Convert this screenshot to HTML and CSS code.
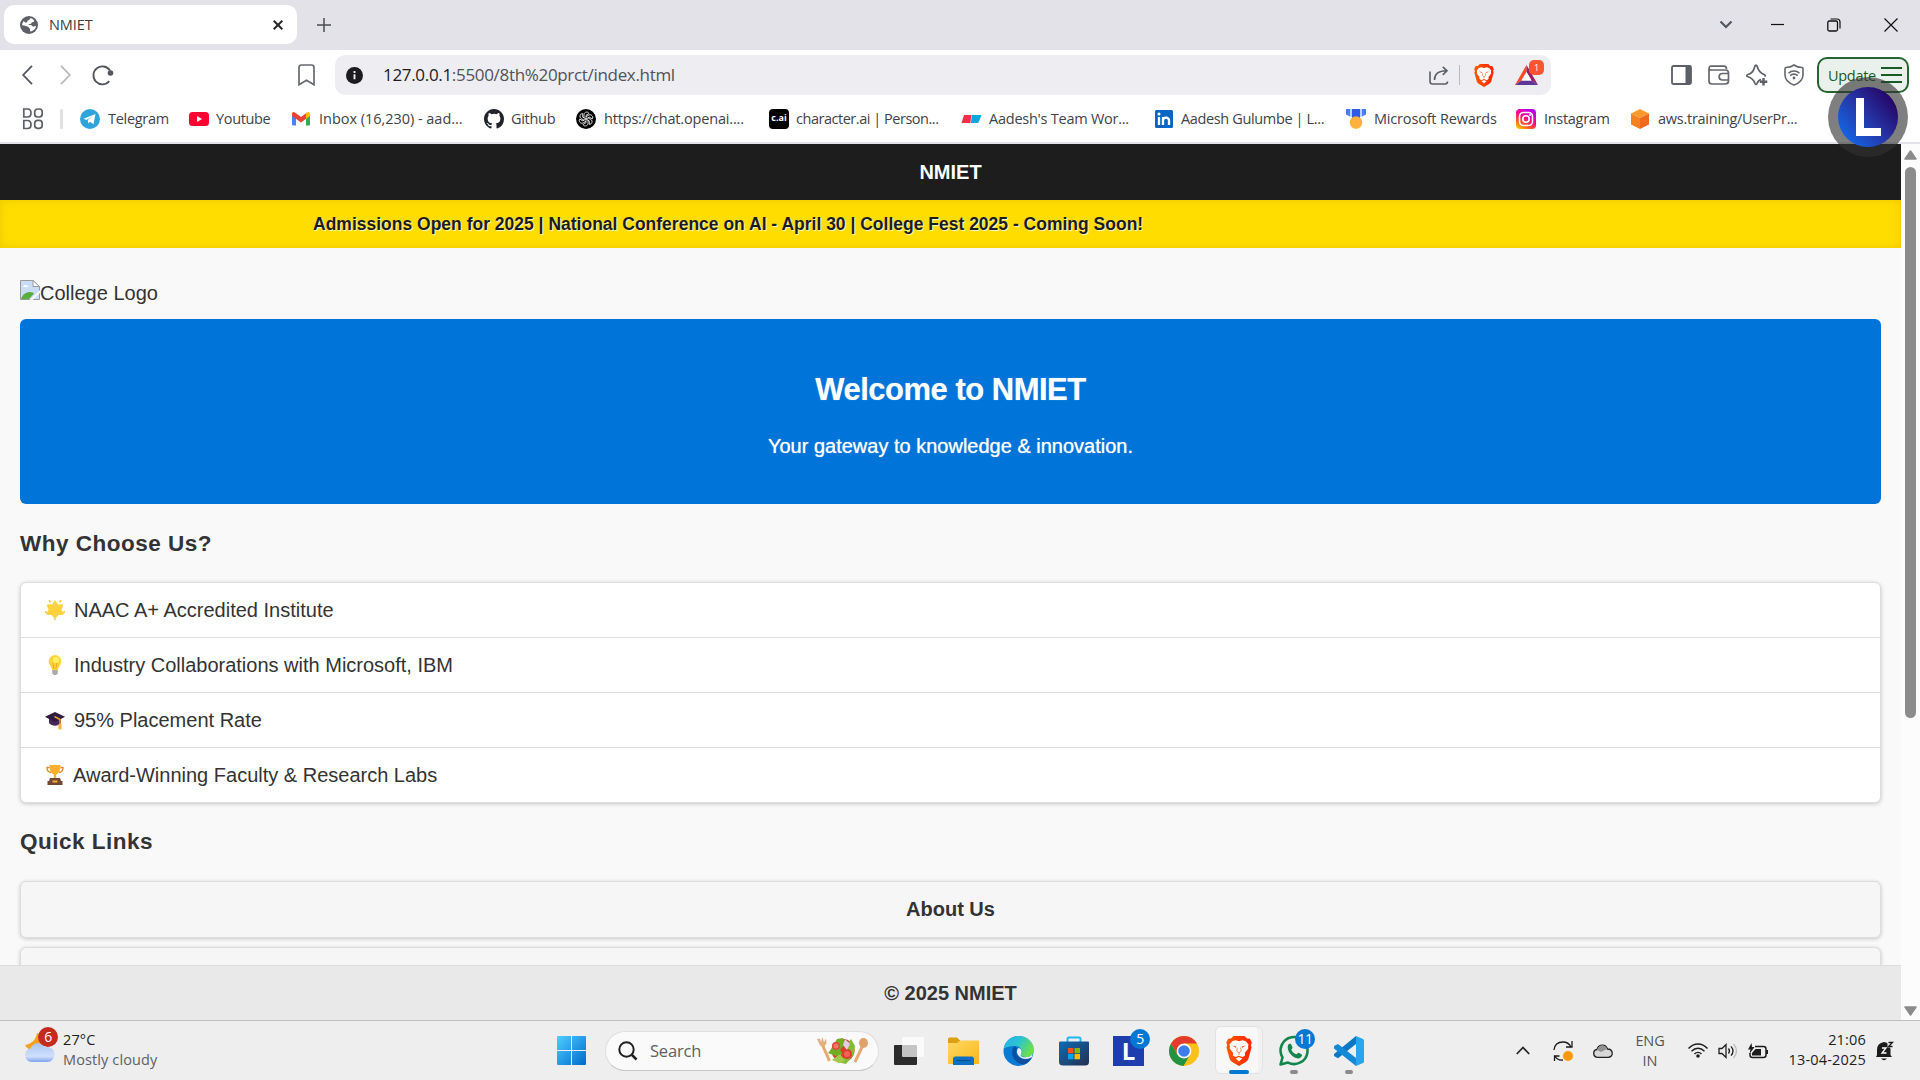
FILE: index.html
```html
<!DOCTYPE html>
<html lang="en">
<head>
<meta charset="utf-8">
<title>NMIET</title>
<link rel="stylesheet" href="styles.css">
</head>
<body>
<svg class="defs" width="0" height="0">
  <defs>
    <linearGradient id="win" x1="0" y1="0" x2="1" y2="1"><stop offset="0" stop-color="#4ccfff"/><stop offset="1" stop-color="#0069cc"/></linearGradient>
    <linearGradient id="insta" x1=".1" y1="1" x2=".7" y2="0"><stop offset="0" stop-color="#ffd000"/><stop offset=".3" stop-color="#ff5a1f"/><stop offset=".6" stop-color="#ff0090"/><stop offset="1" stop-color="#b400f0"/></linearGradient>
    <linearGradient id="folder" x1="0" y1="0" x2="1" y2="1"><stop offset="0" stop-color="#ffd864"/><stop offset="1" stop-color="#f9b81a"/></linearGradient>
    <linearGradient id="edgeTop" x1="0" y1="0" x2="1" y2=".5"><stop offset="0" stop-color="#2bb0ee"/><stop offset=".5" stop-color="#2bc3d2"/><stop offset="1" stop-color="#6be04c"/></linearGradient>
    <linearGradient id="store" x1="0" y1="0" x2="1" y2="1"><stop offset="0" stop-color="#0a6cb8"/><stop offset="1" stop-color="#26304f"/></linearGradient>
    <linearGradient id="cloud" x1="0" y1="0" x2="0" y2="1"><stop offset="0" stop-color="#a9c4f5"/><stop offset=".7" stop-color="#cfe0fb"/><stop offset="1" stop-color="#7ea4ec"/></linearGradient>
    <linearGradient id="lionRed"><stop offset="0" stop-color="#ff5a00"/><stop offset="1" stop-color="#ff2200"/></linearGradient>
    <symbol id="lion" viewBox="0 0 26 30">
      <path d="M7.500 0h11l2.500 2.500 2.800.2 2 3.800-.9 2.500.6 2.500-3 11c-.6 2-2 3-3.500 4L13 30l-6-3.500c-1.500-1-2.900-2-3.500-4l-3-11L1.100 9 .2 6.500l2-3.800L5 2.500z" fill="url(#lionRed)"/>
      <path d="M13 5.200l3.500-.9 3.300.9 2.700 3.300-.5 2 .4 1.800-3.600 4.600.3 2.500-2.600 1.700-3.500-1.400-3.500 1.400-2.600-1.700.3-2.500-3.600-4.600.4-1.800-.5-2 2.700-3.300 3.300-.9zM13 21l3.300 1.600L13 25.400l-3.300-2.800z" fill="#fff"/>
      <path d="M6.300 9.400l4.300 1.200-.9 1.100zM19.700 9.400l-4.300 1.200.9 1.100z" fill="#fb4a14"/>
      <path d="M11.300 11.500l-.5 3.600 2.200 1.700 2.200-1.700-.5-3.600M13 16.800v2.200" stroke="#fb6a3a" stroke-width=".8" fill="none"/>
    </symbol>
  </defs>
</svg>

<div class="screen">
  <div class="tabstrip">
    <div class="tab">
      <svg class="globe" width="18" height="18" viewBox="0 0 18 18"><circle cx="9" cy="9" r="9" fill="#5d6066"/><path d="M10.500 2c1.600.4 3 1.500 3.800 3-.7 1.300-1.700 1.200-2.600 1.400-.3 1.200-1.200 1.500-2.300 1.500-.6 0-.7.700-1.200.9l2.800.1c1.100.2 1.300 1.700 2.500 1.700 1 0 2-.3 2.600-.8-.2 2.700-2.600 5.400-5.700 5.600-.8-.8.1-2.100-.6-2.900-1-.8-1.200-.2-1.300-1.400C7.200 10 4.600 9.700 2.200 9.200 2 7.600 2.800 6 3.700 4.900 4.800 6 5.500 6.700 6.800 6.400c.8-.3.300-1.200.9-1.800.9-.4 2.300-.8 2.800-2.600z" fill="#fff"/></svg>
      <span class="tab-title">NMIET</span>
      <svg class="tab-close" width="10" height="10" viewBox="0 0 10 10"><path d="M.7.7l8.600 8.600M9.300.7L.7 9.300" stroke="#27282c" stroke-width="2"/></svg>
    </div>
    <svg class="newtab" width="14" height="14" viewBox="0 0 14 14"><path d="M7 0v14M0 7h14" stroke="#4a4c52" stroke-width="1.500"/></svg>
    <div class="winctl">
      <svg width="14" height="9" viewBox="0 0 14 9"><path d="M1.500 1.500L7 7l5.500-5.500" fill="none" stroke="#53565d" stroke-width="2.200"/></svg>
      <svg width="14" height="14" viewBox="0 0 14 14"><path d="M0 6.500h13" stroke="#111" stroke-width="1.200"/></svg>
      <svg width="14" height="14" viewBox="0 0 14 14"><path d="M3.500 1h6.500c1.700 0 3 1.300 3 3v6.500" fill="none" stroke="#111" stroke-width="1.200"/><rect x=".8" y="3" width="9.700" height="10" rx="1.500" fill="none" stroke="#111" stroke-width="1.300"/></svg>
      <svg width="14" height="14" viewBox="0 0 14 14"><path d="M.5.500l13 13M13.500.500l-13 13" stroke="#111" stroke-width="1.200"/></svg>
    </div>
  </div>

  <div class="toolbar">
    <div class="nav">
      <svg width="11" height="20" viewBox="0 0 11 20"><path d="M10 .8L1.200 10 10 19.200" fill="none" stroke="#53565e" stroke-width="1.800"/></svg>
      <svg width="11" height="20" viewBox="0 0 11 20"><path d="M1 .8L9.800 10 1 19.200" fill="none" stroke="#b9bac0" stroke-width="1.800"/></svg>
      <svg width="22" height="21" viewBox="0 0 22 21"><path d="M17.300 16.200A9 9 0 1 1 18 5.500" fill="none" stroke="#53565e" stroke-width="1.800"/><circle cx="18.500" cy="8" r="2.800" fill="#53565e"/></svg>
    </div>
    <svg class="bookmark" width="17" height="22" viewBox="0 0 17 22"><path d="M1 3.500C1 2 2 1 3.500 1h10C15 1 16 2 16 3.500V20.800l-7.500-4.500L1 20.800z" fill="none" stroke="#66696f" stroke-width="1.700"/></svg>
    <div class="address">
      <svg width="17" height="17" viewBox="0 0 17 17"><circle cx="8.500" cy="8.500" r="8.500" fill="#1b1b20"/><path d="M8.500 7.300v5M8.500 4v2" stroke="#eeedf2" stroke-width="1.900"/></svg>
      <span class="url"><b>127.0.0.1</b>:5500/8th%20prct/index.html</span>
      <svg class="share" width="20" height="19" viewBox="0 0 20 19"><path d="M1 5.500V15.500Q1 18 3.500 18H16Q18.500 18 18.500 15.500M5.500 14C5.500 8 9 4.800 17.500 4.800M13.800.8l4.200 4-4.200 4" fill="none" stroke="#5c5f66" stroke-width="1.600"/></svg>
      <i class="sep"></i>
      <svg class="shield" width="20" height="23"><use href="#lion"/></svg>
      <span class="bat"><svg width="23" height="20" viewBox="0 0 23 20"><path d="M11.500 0L0 20l6.500-4.500L11.500 7z" fill="#ff4b25"/><path d="M11.500 0L23 20l-6.500-4.500L11.500 7z" fill="#9c1d62"/><path d="M0 20h23l-6.500-4.500h-10z" fill="#5e3799"/><path d="M11.500 7l-5 8.500h10z" fill="#fff"/></svg><em>1</em></span>
    </div>
    <div class="actions">
      <svg width="21" height="20" viewBox="0 0 21 20"><rect x="1" y="1" width="19" height="18" rx="1.500" fill="none" stroke="#5c5f66" stroke-width="1.800"/><path d="M14.500 1h5.500v18h-5.500z" fill="#5c5f66"/></svg>
      <svg width="22" height="20" viewBox="0 0 22 20"><path d="M1 4v12c0 2 1 3 3 3h13c2 0 3.500-1 3.500-3V8c0-1.800-1-3-3-3H3C1.500 5 1 4 1 3.500S1.500 1.200 3 1.200h13c1.500 0 2.500.8 2.500 2.800M20.500 8.500h-6c-4.500 0-4.500 6.500 0 6.500h6" fill="none" stroke="#64676d" stroke-width="1.700"/></svg>
      <svg width="22" height="22" viewBox="0 0 22 22"><path d="M15 15.500c-2 .5-3 1.500-4 4-.5 1.300-1.500 1.300-2 0-1.300-4-3-5.500-7.500-7-1-.4-1-1.300 0-1.700C6 9.300 7.500 7.500 9 2c.4-1.300 1.500-1.300 2 0 1.300 5 3 7 7.500 8.800 1 .4 1 1.200 0 1.600" fill="none" stroke="#5c5f66" stroke-width="1.700"/><path d="M17.500 14v7.500M13.800 17.800h7.500" stroke="#5c5f66" stroke-width="2.400"/></svg>
      <svg width="20" height="22" viewBox="0 0 20 22"><path d="M10 1c2 1.500 5 2.500 8 2.500.8 0 1 .5 1 1.500v6c0 5-3.500 8-9 10C4.500 19 1 16 1 11V5c0-1 .2-1.500 1-1.500C5 3.500 8 2.500 10 1z" fill="none" stroke="#64676d" stroke-width="1.600"/><path d="M4.500 9.200c3-3 8-3 11 0M6.200 11.600c2-2 5.600-2 7.600 0" fill="none" stroke="#64676d" stroke-width="1.600"/><circle cx="10" cy="14" r="1.400" fill="#64676d"/></svg>
    </div>
    <div class="update"><span>Update</span><svg width="21" height="16" viewBox="0 0 21 16"><path d="M0 1h21M0 8h21M0 15h21" stroke="#165c25" stroke-width="2"/></svg></div>
  </div>

  <div class="bookmarks">
    <svg width="20" height="21" viewBox="0 0 20 21"><path d="M0 1h4.500Q8 1 8 5T4.500 9H0M0 12.500h4.500q3.500 0 3.500 4t-3.500 4H0M.8 1v8M.8 12.500v8" fill="none" stroke="#5c5f66" stroke-width="1.700"/><rect x="11.700" y="1" width="7.500" height="8" rx="3" fill="none" stroke="#5c5f66" stroke-width="1.700"/><rect x="11.700" y="12.300" width="7.500" height="8" rx="3" fill="none" stroke="#5c5f66" stroke-width="1.700"/></svg>
    <i class="bar"></i>
    <a class="bm"><svg width="20" height="20" viewBox="0 0 20 20"><circle cx="10" cy="10" r="10" fill="#2fa3dc"/><path d="M3.500 9.800L15.500 5l-2 10.200-3.400-2.500-1.800 1.700-.5-3.300L12.800 7l-6.300 3.900z" fill="#fff"/></svg><span class="s-tel">Telegram</span></a>
    <a class="bm"><svg width="20" height="20" viewBox="0 0 20 20"><rect y="3" width="20" height="14" rx="3.500" fill="#ff0033"/><path d="M8 7l5 3-5 3z" fill="#fff"/></svg><span class="s-yt">Youtube</span></a>
    <a class="bm"><svg width="18" height="20" viewBox="0 0 18 20"><path d="M0 6h4v10.500H1.200Q0 16.500 0 15.300z" fill="#4285f4"/><path d="M14 6h4v9.300q0 1.200-1.200 1.200H14z" fill="#34a853"/><path d="M0 5q0-3 3-1.500L9 8l6-4.500V9l-6 4.500L4 9.700 0 7.500z" fill="#ea4335"/><path d="M14 4.200Q18 1.500 18 5v2l-4 3z" fill="#fbbc04"/></svg><span class="s-mail">Inbox (16,230) - aad...</span></a>
    <a class="bm"><svg width="20" height="20" viewBox="0 0 16 16"><path fill="#20242a" d="M8 0C3.580 0 0 3.580 0 8c0 3.540 2.290 6.530 5.470 7.590.4.070.55-.17.55-.38 0-.19-.01-.82-.01-1.490-2.010.37-2.530-.49-2.690-.94-.09-.23-.48-.94-.82-1.130-.28-.15-.68-.52-.01-.53.63-.01 1.080.58 1.230.82.72 1.210 1.870.87 2.330.66.07-.52.28-.87.51-1.070-1.780-.2-3.640-.89-3.640-3.950 0-.87.31-1.590.82-2.150-.08-.2-.36-1.020.08-2.120 0 0 .67-.21 2.200.82a7.600 7.600 0 0 1 4 0c1.530-1.040 2.200-.82 2.200-.82.44 1.100.16 1.920.08 2.120.51.56.82 1.270.82 2.150 0 3.070-1.870 3.750-3.650 3.950.29.25.54.73.54 1.480 0 1.070-.01 1.930-.01 2.200 0 .21.15.46.55.38A8 8 0 0 0 16 8c0-4.420-3.580-8-8-8z"/></svg><span class="s-git">Github</span></a>
    <a class="bm"><svg width="20" height="20" viewBox="0 0 20 20"><circle cx="10" cy="10" r="10" fill="#000"/><g fill="none" stroke="#fff" stroke-width=".8"><path id="knot" d="M8 8.800V5.700c0-3 4-3.500 5-1.200L10 6.300v3.500"/><use href="#knot" transform="rotate(60 10 10)"/><use href="#knot" transform="rotate(120 10 10)"/><use href="#knot" transform="rotate(180 10 10)"/><use href="#knot" transform="rotate(240 10 10)"/><use href="#knot" transform="rotate(300 10 10)"/></g></svg><span class="s-ai">https://chat.openai....</span></a>
    <a class="bm"><i class="cai">c.ai</i><span class="s-cai">character.ai | Person...</span></a>
    <a class="bm"><svg width="20" height="20" viewBox="0 0 20 20"><path d="M3 6h7.500l-1.200 8H.5z" fill="#f22f46"/><path d="M11 6h9.500L18 12.500Q17.500 14 16 14H9.800z" fill="#06a7e2"/></svg><span class="s-team">Aadesh's Team Wor...</span></a>
    <a class="bm"><svg width="18" height="20" viewBox="0 0 18 20"><rect y="1" width="18" height="18" rx="1.500" fill="#0a66c2"/><path d="M4 8v8M8 8v8M8 11.500C8 8 14 7.500 14 11.500V16" fill="none" stroke="#fff" stroke-width="2.300"/><circle cx="4" cy="5" r="1.500" fill="#fff"/></svg><span class="s-in">Aadesh Gulumbe | L...</span></a>
    <a class="bm"><svg width="20" height="20" viewBox="0 0 20 20"><path d="M0 0h4v7.500L0 5.500zM16 0h4v5.500l-4 2z" fill="#4b7df8"/><path d="M4 0h2v8l-2-.5zM14 0h2v7.500l-2 .5z" fill="#b8d3ff"/><path d="M6 0h8v9H6z" fill="#305be8"/><circle cx="10" cy="13.500" r="6.300" fill="#ffb03f"/></svg><span class="s-ms">Microsoft Rewards</span></a>
    <a class="bm"><svg width="20" height="20" viewBox="0 0 20 20"><rect width="20" height="20" rx="4" fill="url(#insta)"/><rect x="3.500" y="3.500" width="13" height="13" rx="4" fill="none" stroke="#fff" stroke-width="1.600"/><circle cx="10" cy="10" r="3.200" fill="none" stroke="#fff" stroke-width="1.600"/><circle cx="14" cy="6" r="1" fill="#fff"/></svg><span class="s-ig">Instagram</span></a>
    <a class="bm"><svg width="20" height="20" viewBox="0 0 20 20"><path d="M10 0l9 4.500L10 9 1 4.500z" fill="#fb9a2c"/><path d="M1 4.500L10 9v11l-9-4.500z" fill="#f58220"/><path d="M19 4.500L10 9v11l9-4.500z" fill="#ee6a1f"/></svg><span class="s-aws">aws.training/UserPr...</span></a>
  </div>

  <div class="viewport">
    <main class="page">
      <header class="page-header">NMIET</header>
      <div class="ticker"><span>Admissions Open for 2025 | National Conference on AI - April 30 | College Fest 2025 - Coming Soon!</span></div>
      <div class="content">
        <div class="logo"><svg width="20" height="20" viewBox="0 0 20 20"><path d="M.5.500h12.500l6.500 6v13H.5z" fill="#c9dcfa" stroke="#9a9a9a"/><path d="M3 7q.5-2 2.500-2T8 6.500Q9.500 7 9.300 7z" fill="#fff"/><path d="M1 19c2-5 5-7 9-7 2 0 3 .8 4 1.500L9 19z" fill="#58ad3b"/><path d="M20.500 9.500v3L12 20.500H9z" fill="#f9f9f9"/><path d="M13 .5l6.500 6H13z" fill="#fff" stroke="#9a9a9a"/></svg><span>College Logo</span></div>
        <section class="hero"><h1>Welcome to NMIET</h1><p>Your gateway to knowledge &amp; innovation.</p></section>
        <h3 class="why">Why Choose Us?</h3>
        <ul class="list">
          <li><svg width="20" height="20" viewBox="0 0 20 20"><path d="M10 1.500l2.300 4.200 4.900-.4-1.900 4.400 2.500 4-4.700.2L10 17.500l-3.100-3.600-4.700-.2 2.500-4-1.900-4.400 4.900.4z" fill="#ffd23e" stroke="#ffd23e" stroke-width="2" stroke-linejoin="round"/><path d="M4 .3l1.500 1.900M16 .3l-1.500 1.900M0 12l1.800.4M20 12l-1.800.4M10 18.500V20" stroke="#f9c22b" stroke-width="1.500"/></svg><span>NAAC A+ Accredited Institute</span></li>
          <li><svg width="20" height="20" viewBox="0 0 20 20"><path d="M10 0a6.300 6.300 0 0 0-6.300 6.500c0 3.500 3 5 3.500 8.500h5.600c.5-3.500 3.500-5 3.500-8.500A6.300 6.300 0 0 0 10 0z" fill="#ffd43b"/><circle cx="11" cy="5" r="3" fill="#fff06a"/><path d="M8 8l1 6M12 8l-1 6" stroke="#f5a623"/><path d="M7.200 15h5.600v3.500L11 20H9l-1.800-1.500z" fill="#aaa"/></svg><span>Industry Collaborations with Microsoft, IBM</span></li>
          <li><svg width="20" height="20" viewBox="0 0 20 20"><path d="M4 8v5c3 3.500 9 3.500 12 0V8z" fill="#46295a"/><path d="M10 2l10 4.800-10 5.400L0 6.800z" fill="#301b45"/><path d="M9.500 6.500L15 9.500v9" fill="none" stroke="#e99a2a" stroke-width="1.500"/><path d="M13.500 14h3v5.500h-3z" fill="#ffae3b"/></svg><span>95% Placement Rate</span></li>
          <li><svg width="20" height="20" viewBox="0 0 20 20"><path d="M4.500 2.500H2Q2 7 6 7.500M15.500 2.500H18Q18 7 14 7.500" fill="none" stroke="#d88a32" stroke-width="1.400"/><path d="M4.500 0h11c0 5-.8 8-4.300 9.500V13H8.800V9.500C5.300 8 4.500 5 4.500 0z" fill="#ffae2e"/><path d="M5 13h10l1 3h1.500v4h-15v-4H4z" fill="#704838"/><path d="M7.500 15.500h5v2h-5z" fill="#ffae2e"/></svg><span class="award">Award-Winning Faculty &amp; Research Labs</span></li>
        </ul>
        <h3 class="quick">Quick Links</h3>
        <a class="btn">About Us</a>
        <a class="btn"></a>
      </div>
      <footer class="page-footer">© 2025 NMIET</footer>
    </main>
    <div class="scroll">
      <svg width="13" height="10" viewBox="0 0 13 10"><path d="M6.500 1L12 9H1z" fill="#8b8b8b" stroke="#8b8b8b" stroke-linejoin="round" stroke-width="1.500"/></svg>
      <i class="thumb"></i>
      <svg width="13" height="10" viewBox="0 0 13 10"><path d="M6.500 9L12 1H1z" fill="#8b8b8b" stroke="#8b8b8b" stroke-linejoin="round" stroke-width="1.500"/></svg>
    </div>
  </div>

  <div class="taskbar">
    <div class="weather">
      <span class="w-icon"><svg width="32" height="32" viewBox="0 0 32 32"><path d="M13 1c-1 6-5 11-12 12 2 4 6 6 10 5s7-5 7-9-2-7-5-8z" fill="#f5a11d"/><path d="M7.500 30a7 7 0 0 1-1-13.800C8 12.500 12 10.300 16 11.500c2 .5 3.800 2 4.500 4 5-1.500 10 1.500 10 7a7.300 7.300 0 0 1-7 7.500z" fill="url(#cloud)"/></svg><em class="badge red">6</em></span>
      <div class="w-text"><span>27°C</span><span class="dim">Mostly cloudy</span></div>
    </div>
    <svg class="start" width="29" height="29" viewBox="0 0 29 29"><path d="M1 0h13v14H0V1Q0 0 1 0zM15 0h13q1 0 1 1v13H15zM0 15h14v14H1q-1 0-1-1zM15 15h14v13q0 1-1 1H15z" fill="url(#win)"/></svg>
    <div class="search">
      <svg width="20" height="20" viewBox="0 0 20 20"><circle cx="8.500" cy="8.500" r="7.200" fill="none" stroke="#222" stroke-width="2"/><path d="M13.500 13.500l5 5" stroke="#222" stroke-width="2.500"/></svg>
      <span>Search</span>
      <svg width="51" height="27" viewBox="0 0 51 27"><path d="M5.500 8l7 16M46 8l-8 17" stroke="#e5aa72" stroke-width="3"/><path d="M0 2l3-.5 1 3.500 1.500-5 1.500 5 2-3.500.5 5Q7 11 3 8.500z" fill="#e5b080"/><ellipse cx="46.500" cy="6" rx="4.500" ry="5" fill="#dfa26b"/><circle cx="26" cy="13.500" r="11.500" fill="#d8402e"/><path d="M20 2l6-1 2 6-5 6 3 4-7 2-8-3 4-5z" fill="#71ad25"/><path d="M34 2l4 7-1 8-4 5-4 5-9-2 3-4 7-1 2-6-4-4z" fill="#86bb35"/><path d="M15 23l8-6 5 7-6 2z" fill="#a4ca4b"/><circle cx="19" cy="9" r="4" fill="#e4493a"/><circle cx="19" cy="9" r="2.500" fill="#f0796a"/><circle cx="30" cy="17" r="5" fill="#dd3a2c"/><circle cx="30" cy="17" r="3" fill="#ee6455"/><path d="M28 2l5 5-3 6-4-5z" fill="#e4cce1"/></svg>
    </div>
    <div class="apps">
      <span class="app"><svg width="30" height="28" viewBox="0 0 30 28"><rect y="8" width="23" height="20" rx="1" fill="#2c2c2c"/><rect x="8" width="22" height="20" rx="1" fill="#fff" opacity=".72"/></svg></span>
      <span class="app"><svg width="31" height="28" viewBox="0 0 31 28"><path d="M0 2q0-1.500 1.500-1.500H9L12.500 4v4H0z" fill="#dda010"/><path d="M0 6h9l3.500-2.500H30q1 0 1 1V27H0z" fill="url(#folder)"/><path d="M5 28v-6q0-2.500 2.500-2.500h16Q26 19.500 26 22v6z" fill="#0d70c5"/><path d="M8.500 23.500h14" stroke="#064f92" stroke-width="1.200"/></svg></span>
      <span class="app"><svg width="31" height="30" viewBox="0 0 31 30"><circle cx="15.500" cy="15" r="15" fill="#087bd5"/><path d="M.7 12.500C2.500 4.500 8.500 0 15.500 0 24 0 31 6 31 13.500c0 5-3.500 7.500-8 7.500-4 0-6-1.500-5-3 2-3-.5-8-6-8C7 9.500 3 11.500.7 12.500z" fill="url(#edgeTop)"/><path d="M12 10C7.500 12 7 27 21 28.500c3-1 6-3.500 7.500-6.500-9 4-18-2-14.500-9.500z" fill="#0f4f9f"/><path d="M18 18c-1 2 1 3.500 4.500 3.300 3 0 5.500-1 7-3l-.5 2.700c-4 2.500-9 2.500-12 0-4-3-3.500-7.500-1.500-9 2.500.5 4 3 2.500 6z" fill="#eee"/></svg></span>
      <span class="app"><svg width="30" height="30" viewBox="0 0 30 30"><path d="M8.500 7V3q0-1.500 1.500-1.500h10q1.500 0 1.500 1.500v4" fill="none" stroke="#22b5f3" stroke-width="2"/><path d="M1 5.500h28q1 0 1 1V26q0 3.500-4 3.500H4q-4 0-4-3.500V6.500q0-1 1-1z" fill="url(#store)"/><path d="M9 12h5.500v5.300H9z" fill="#f25022"/><path d="M15.500 12H21v5.300h-5.500z" fill="#7fba00"/><path d="M9 18h5.500v5.300H9z" fill="#00a4ef"/><path d="M15.500 18H21v5.300h-5.500z" fill="#ffb900"/></svg></span>
      <span class="app"><i class="lapp">L</i><em class="badge blue">5</em></span>
      <span class="app"><svg width="30" height="30" viewBox="0 0 30 30"><circle cx="15" cy="15" r="15" fill="#fbc116"/><path d="M2 7.500A15 15 0 0 1 28 7.500H15l-6.500 11z" fill="#e33b2e"/><path d="M2 7.500L8.500 18.700 15 22l-.5 8A15 15 0 0 1 2 7.500z" fill="#229342"/><path d="M14.500 30L21 18.700 15 22H9z" fill="#229342"/><circle cx="15" cy="15" r="7.400" fill="#fff"/><circle cx="15" cy="15" r="5.800" fill="#3d7eea"/></svg></span>
      <span class="app active"><i class="tile"></i><svg width="26" height="30"><use href="#lion"/></svg></span>
      <span class="app run"><svg width="30" height="30" viewBox="0 0 30 30"><path d="M1.500 28.500l2-7A13.500 13.500 0 1 1 9 26.600z" fill="none" stroke="#15854f" stroke-width="2.600" stroke-linejoin="round"/><path d="M9 9c1.500-2 3-1.500 3.500 0l1 2.500c.2.800-1.500 2-1 2.700 1 1.800 2.500 3.200 4.500 4 1 .4 1.800-1.800 2.700-1.500l2.800 1.500c1.500.8-.5 4-3 4.200C14.500 22.800 7 15.500 9 9z" fill="#15854f"/></svg><em class="badge blue">11</em></span>
      <span class="app run"><svg width="30" height="30" viewBox="0 0 30 30"><path d="M22 0v8L4 22.300 0 20v-2z" fill="#0a78c2"/><path d="M4 8l18 14v8L0 12.500V10z" fill="#1489d6"/><path d="M22 0l7 3q1 .5 1 1.500v21q0 1-1 1.500l-7 3z" fill="#27a5ee"/></svg></span>
    </div>
    <div class="tray">
      <svg width="14" height="9" viewBox="0 0 14 9"><path d="M.8 8L7 1.500 13.200 8" fill="none" stroke="#222" stroke-width="1.700"/></svg>
      <svg width="20" height="20" viewBox="0 0 20 20"><path d="M1 9C1.500 4 5 1 10 1c4 0 6.500 2 8 5M19 0v6h-6M1.500 20v-5h5M2 15c1.500 3 4.500 4.500 8 4" fill="none" stroke="#1b1b1b" stroke-width="1.300"/><circle cx="15" cy="15" r="5" fill="#ff9800"/></svg>
      <svg width="20" height="14" viewBox="0 0 20 14"><path d="M5 13.300C-.5 13.300-.5 6 4 5.500 5 .5 12.500-.8 14.500 5c6 0 6.500 8.300.5 8.300z" fill="#d8d8d8" stroke="#222" stroke-width="1.300"/><path d="M4 6C6 0 12 0 14 5l-6 3z" fill="#929292"/></svg>
      <div class="lang"><span>ENG</span><span>IN</span></div>
      <svg width="20" height="15" viewBox="0 0 20 15"><path d="M.5 5.500c5.500-6 13.500-6 19 0M3.500 8.300c4-4 9-4 13 0M6.500 11c2-2.200 5-2.200 7 0" fill="none" stroke="#1f1f1f" stroke-width="1.400"/><circle cx="10" cy="13" r="1.800" fill="#1f1f1f"/></svg>
      <svg width="20" height="16" viewBox="0 0 20 16"><path d="M1 5.500v5h3l4 4v-13l-4 4z" fill="none" stroke="#1f1f1f" stroke-width="1.300"/><path d="M10.500 5.500q2 2.500 0 5M13 3.300q4 4.700 0 9.400" fill="none" stroke="#1f1f1f" stroke-width="1.300"/><path d="M15.500 1q6 7 0 14" fill="none" stroke="#bbb" stroke-width="1.300"/></svg>
      <svg width="20" height="16" viewBox="0 0 20 16"><path d="M7 3.500h8.500Q18 3.500 18 6v6q0 2.500-2.500 2.500h-11Q2 14.500 2 12V10" fill="none" stroke="#1b1b1b" stroke-width="1.500"/><path d="M18 7h2v4h-2zM7.500 6h5.500v6.500H4V10z" fill="#1b1b1b"/><path d="M3.500 0L0 6.500h2.500L1.500 11 6.500 4H4z" fill="#1b1b1b"/></svg>
      <div class="clock"><span>21:06</span><span>13-04-2025</span></div>
      <svg width="18" height="20" viewBox="0 0 18 20"><path d="M1 14V9q0-7 7-8 6 1 6.500 7v6l1.500 2H0z" fill="#1b1b1b"/><path d="M5 17.500h6Q8 21 5 17.500z" fill="#1b1b1b"/><path d="M11.500 0h6v6.500h-6z" fill="#eee"/><path d="M12.500 1.500h4l-4 4h4" fill="none" stroke="#1b1b1b" stroke-width="1.300"/><path d="M6 7h4l-4 5h4.500" fill="none" stroke="#fff" stroke-width="1.300"/></svg>
    </div>
  </div>
  <div class="bubble"><i></i></div>
</div>
</body>
</html>
```

FILE: styles.css
```css
* { box-sizing: border-box; }
body { margin: 0; font-family: "Open Sans", "Noto Sans", sans-serif; overflow: hidden; }
svg { flex: none; display: block; overflow: visible; }
i, em { font-style: normal; }
.defs { position: absolute; }
.screen { position: relative; width: 1920px; height: 1080px; display: flex; flex-direction: column; background: #fff; white-space: nowrap; overflow: hidden; }

.tabstrip { height: 50px; flex: none; background: #e3e2e8; display: flex; padding: 5px 22px 6px 4px; align-items: center; }
.tab { width: 293px; height: 39px; border-radius: 10px; background: #fff; display: flex; align-items: center; padding: 0 14px 0 16px; }
.tab-title { margin-left: 11px; font-size: 14.5px; letter-spacing: -.1px; color: #3b3d43; flex: 1; }
.newtab { margin-left: 20px; }
.winctl { margin-left: auto; display: flex; align-items: center; }
.winctl svg:nth-child(2) { margin-left: 38px; }
.winctl svg:nth-child(n+3) { margin-left: 42px; }
.winctl svg:nth-child(4) { margin-left: 43px; }

.toolbar { height: 50px; flex: none; display: flex; align-items: center; padding-right: 11px; }
.nav { display: flex; align-items: center; padding-left: 22px; width: 298px; }
.nav svg:nth-child(2) { margin-left: 27px; }
.nav svg:nth-child(3) { margin-left: 21px; }
.address { margin-left: 20px; width: 1216px; height: 40px; border-radius: 10px; background: #eeedf2; display: flex; align-items: center; padding-left: 11px; }
.url { margin-left: 20px; width: 1046px; padding-bottom: 2px; font-size: 17px; letter-spacing: -.32px; color: #50525a; }
.url b { font-weight: 400; color: #1b1b20; }
.sep { width: 1px; height: 20px; background: #bbbac1; margin: 0 14px 0 10px; }
.bat { position: relative; margin-left: 21px; }
.bat em { position: absolute; left: 14px; top: -5px; width: 15px; height: 15px; border-radius: 5px; background: #fc5430; color: #fff; font-size: 9px; line-height: 15px; text-align: center; }
.actions { display: flex; align-items: center; gap: 16px; margin-left: 120px; }
.update { margin-left: auto; width: 92px; height: 36px; border: 2px solid #25652f; border-radius: 10px; background: #eaf0eb; color: #165c25; display: flex; align-items: center; padding-left: 9px; gap: 5px; font-size: 14.5px; letter-spacing: -.3px; }
.update span { width: 48px; }

.bookmarks { height: 44px; flex: none; border-bottom: 2px solid #e3e2e8; display: grid; grid-template-columns: 37px 20px 109px 103px 192px 92px 193px 192px 194px 191px 170px 114px 200px; padding: 0 0 5px 23px; align-items: center; }
.bar { width: 3px; height: 20px; border-radius: 2px; background: #e0dfe6; }
.bm { display: flex; align-items: center; gap: 8px; font-size: 14.5px; letter-spacing: -.3px; color: #414349; }
.s-yt { margin-left: -1px; letter-spacing: -.35px; }
.s-cai { margin-left: -1px; letter-spacing: -.47px; }
.s-mail { margin-left: 1px; letter-spacing: -.03px; }
.s-git { margin-left: -1px; }
.s-ai, .s-ms { letter-spacing: -.18px; }
.s-team { letter-spacing: -.24px; }
.s-in { letter-spacing: -.36px; }
.s-aws { letter-spacing: -.26px; }
.cai { width: 20px; height: 20px; border-radius: 4px; background: #000; color: #fff; font-size: 9px; font-weight: 700; line-height: 18px; text-align: center; letter-spacing: 0; }

.viewport { height: 876px; flex: none; display: flex; font-family: "Liberation Sans", Arial, sans-serif; color: #333; }
.page { width: 1901px; display: flex; flex-direction: column; background: #f9f9f9; }
.page-header { height: 56px; flex: none; background: #1d1d1d; color: #fff; font-weight: 700; font-size: 20px; line-height: 56px; text-align: center; }
.ticker { height: 48px; flex: none; background: #fd0; box-shadow: inset 0 0 8px rgba(0,0,0,.1); padding-left: 313px; font-weight: 700; font-size: 17.5px; line-height: 49px; color: #1c1c1c; text-shadow: 1px 1px 1px rgba(255,255,255,.8); }
.content { flex: 1; min-height: 0; overflow: hidden; padding: 32px 20px 0; display: flex; flex-direction: column; }
.logo { height: 39px; flex: none; display: flex; font-size: 20px; line-height: 26px; }
.hero { height: 185px; flex: none; border-radius: 6px; background: #0074d9; color: #fff; text-align: center; padding-top: 50px; }
.hero h1 { margin: 0; font-size: 31px; line-height: 42px; letter-spacing: -.5px; text-shadow: 0 0 1px rgba(255,255,255,.5); }
.hero p { margin: 22px 0 0; font-size: 20px; line-height: 26px; text-shadow: 0 0 1px rgba(255,255,255,.8); }
h3 { margin: 0; flex: none; font-size: 22.5px; line-height: 30px; letter-spacing: .5px; }
.why { margin-top: 25px; }
.list { list-style: none; margin: 23px 0 0; padding: 0; border: 1px solid #ddd; border-radius: 6px; background: #fff; box-shadow: 0 1px 4px rgba(0,0,0,.2); }
.list li { height: 55px; display: flex; align-items: center; padding-left: 24px; gap: 9px; font-size: 20px; border-bottom: 1px solid #ddd; }
.list li:last-child { height: 54px; border-bottom: 0; }
.award { margin-left: -1px; }
.quick { margin-top: 24px; }
.btn { flex: none; height: 57px; border: 1px solid #ddd; border-radius: 6px; background: #f6f6f6; box-shadow: 0 1px 4px rgba(0,0,0,.2); margin-bottom: 9px; font-size: 20px; font-weight: 700; line-height: 55px; text-align: center; }
.quick + .btn { margin-top: 24px; }
.page-footer { height: 55px; flex: none; border-top: 1px solid #ddd; background: #e9e9e9; font-weight: 700; font-size: 20px; line-height: 54px; text-align: center; }
.scroll { width: 19px; background: #fcfcfc; display: flex; flex-direction: column; align-items: center; padding: 6px 0 4px; }
.thumb { width: 11px; height: 551px; border-radius: 6px; background: #8b8b8b; margin: 7px 0 auto; }

.taskbar { height: 60px; flex: none; border-top: 1px solid #bebebe; background: #eee; display: flex; align-items: center; }
.weather { width: 557px; display: flex; padding: 0 0 2px 24px; }
.w-icon, .app { position: relative; }
.w-icon { top: 2px; }
.w-text { margin-left: 7px; display: flex; flex-direction: column; font-size: 14.5px; line-height: 20px; letter-spacing: .12px; color: #1f1f1f; }
.dim { color: #606060; }
.badge { position: absolute; width: 20px; height: 20px; border-radius: 10px; color: #fff; font-size: 14px; line-height: 20px; text-align: center; letter-spacing: -.5px; }
.red { left: 14px; top: -5px; background: #c42b1c; }
.blue { left: 29px; top: 8px; background: #0078d4; }
.search { margin-left: 19px; width: 274px; height: 40px; border: 1px solid #dedede; border-bottom-color: #c7c7c7; border-radius: 20px; background: #fafafa; display: flex; align-items: center; padding: 0 10px 0 12px; }
.search span { flex: 1; margin-left: 12px; font-size: 16.5px; letter-spacing: -.2px; color: #606060; }
.apps { display: flex; margin-left: 2px; }
.app { width: 55px; height: 59px; display: flex; align-items: center; justify-content: center; }
.lapp { width: 31px; height: 30px; background: #1e3eaf; color: #fff; font-weight: 700; font-size: 24px; line-height: 29px; text-align: center; }
.active svg { position: relative; }
.tile { position: absolute; left: 4px; top: 5px; width: 48px; height: 48px; border-radius: 6px; background: #f8f8f8; border: 1px solid #e2e2e2; box-shadow: inset -4px 0 #f1f1f1; }
.active::after, .run::after { content: ""; position: absolute; bottom: 6px; left: 50%; width: 8px; height: 4px; margin-left: -4px; border-radius: 2px; background: #8a8a8a; }
.active::after { width: 20px; margin-left: -10px; background: #0078d4; }
.tray { margin-left: auto; width: 404px; display: flex; align-items: center; }
.tray svg:nth-child(2) { margin-left: 23px; }
.tray svg:nth-child(3) { margin-left: 20px; }
.lang, .clock { display: flex; flex-direction: column; padding-bottom: 2px; font-size: 14.5px; line-height: 20px; letter-spacing: -.3px; color: #1f1f1f; }
.lang { margin-left: 19px; width: 36px; padding-bottom: 0; align-items: center; letter-spacing: -.1px; color: #555; }
.lang + svg { margin-left: 20px; }
.tray svg:nth-child(6), .tray svg:nth-child(7) { margin-left: 10px; }
.clock { margin-left: 15px; width: 83px; align-items: flex-end; letter-spacing: .18px; }
.clock + svg { margin-left: 10px; }

.bubble { position: absolute; left: 1828px; top: 77px; width: 80px; height: 80px; border-radius: 50%; background: rgba(48,48,48,.62); padding: 10px; }
.bubble i { position: relative; display: block; width: 60px; height: 60px; border-radius: 50%; background: linear-gradient(50deg, #1468e8 10%, #2535a5 50%, #250060 90%); }
.bubble i::before, .bubble i::after { content: ""; position: absolute; left: 18px; top: 11px; width: 8px; height: 38px; background: #fff; }
.bubble i::after { top: 41px; width: 25px; height: 8px; }
```
